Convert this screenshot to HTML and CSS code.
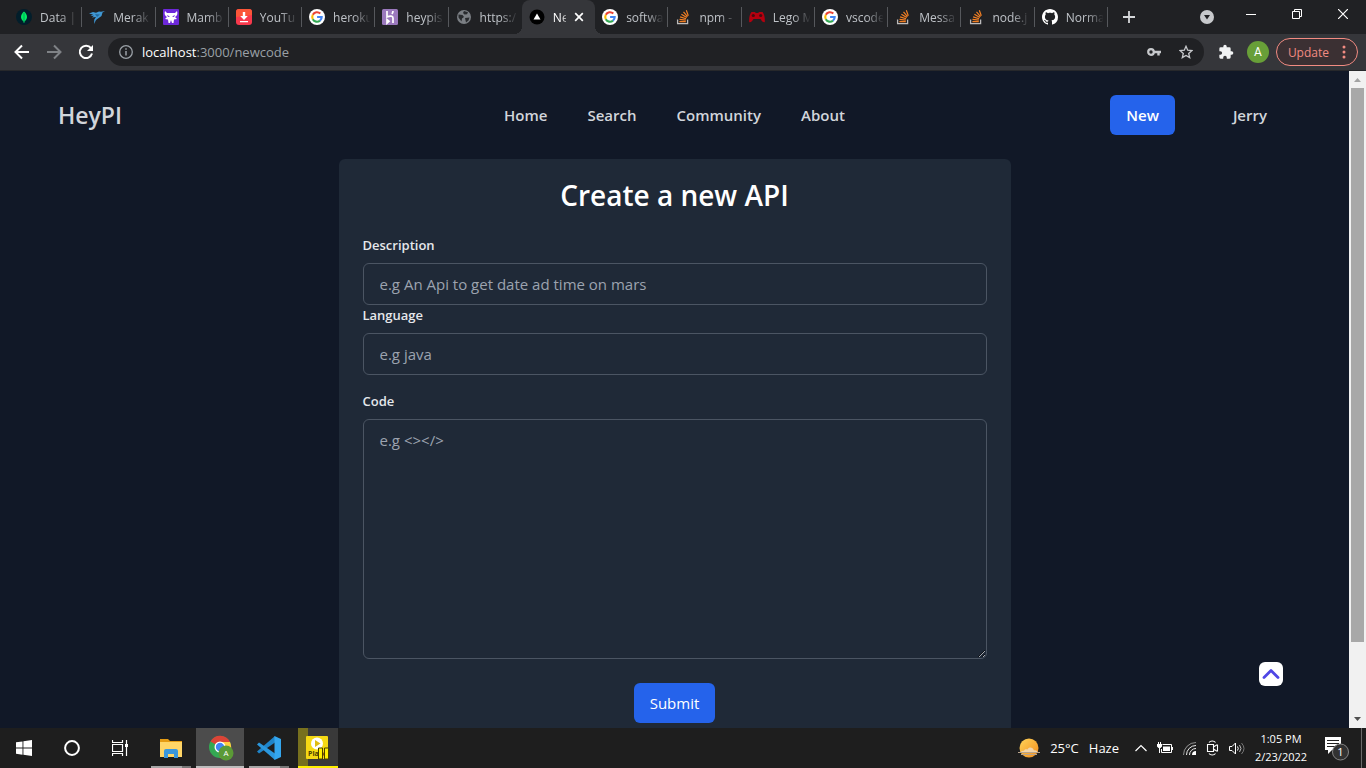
FILE: index.html
```html
<!DOCTYPE html>
<html lang="en">
<head>
<meta charset="utf-8">
<title>HeyPI - Create a new API</title>
<link rel="stylesheet" href="styles.css">
</head>
<body>
<svg class="sprite" aria-hidden="true">
  <symbol id="google" viewBox="0 0 16 16">
    <circle cx="8" cy="8" r="8" fill="#fff"/>
    <g fill="none" stroke-width="2.1">
      <path d="M11.3 4.6A4.7 4.7 0 0 0 3.8 5.8" stroke="#ea4335"/>
      <path d="M3.8 5.8a4.7 4.7 0 0 0 0 4.4" stroke="#fbbc05"/>
      <path d="M3.8 10.2a4.7 4.7 0 0 0 7.2 1.4" stroke="#34a853"/>
      <path d="M11 11.6A4.7 4.7 0 0 0 12.7 8H8.1" stroke="#4285f4"/>
    </g>
  </symbol>
  <symbol id="stack" viewBox="0 0 16 16">
    <path d="M2.600 10.500v4.200h10v-4.200" fill="none" stroke="#bcbbbb" stroke-width="1.300"/>
    <path d="M4.400 12.700h6.400M4.500 10.400l6.300.7M5.100 7.900l6 1.800M6.400 5.200l5.400 3.200M8.500 2.900l4 4.700M11.300 1.200l2 5.600" fill="none" stroke="#f48024" stroke-width="1.200"/>
  </symbol>
</svg>

<header class="browser">
  <div class="tabstrip">
    <div class="tabs">
      <div class="tab"><svg class="fav" viewBox="0 0 16 16"><circle cx="8" cy="8" r="8" fill="#021e2b"/><path d="M8 2.500c4 3.500 4 7.500 0 10.500C4 10 4 6 8 2.500z" fill="#00ed64"/><path d="M8 4v10" stroke="#00a65a" stroke-width="1"/></svg><span class="tab-name">Data |</span></div>
      <div class="tab"><svg class="fav" viewBox="0 0 16 16"><path d="M0 4.500L4 3l3 .8L10 2.500l2 .3L16 2l-2.500 1.500L12.500 7 9 9.500l-2 1.500-2 4 .3-4.500L7 8 3 8.500l2-1.800-3.500.3L4 5.500z" fill="#3f97d3"/><path d="M6 5l5 .5L8 8z" fill="#236a9f"/></svg><span class="tab-name">Merak</span></div>
      <div class="tab"><svg class="fav" viewBox="0 0 16 16"><rect width="16" height="16" rx="1" fill="#6d28d9"/><path d="M2 2c-1 3 0 5 2 6l-2 2 3 .5.500 3.500h1.500L8 11l1 3h1.500l.5-3.500 3-.5-2-2c2-1 3-3 2-6l-2 2H4z" fill="#fff"/><path d="M4 6l3 1.500-2 .5zm8 0L9 7.500l2 .5z" fill="#6d28d9"/></svg><span class="tab-name">Mamb</span></div>
      <div class="tab"><svg class="fav" viewBox="0 0 16 16"><rect width="16" height="16" rx="3" fill="#f8394c"/><path d="M3 0h10a3 3 0 0 1 3 3v3L0 8V3a3 3 0 0 1 3-3z" fill="#fb5638"/><path d="M6.800 3h2.400v4h2.600L8 11 4.200 7h2.600zM4 12h8v1.300H4z" fill="#fff"/></svg><span class="tab-name">YouTu</span></div>
      <div class="tab"><svg class="fav"><use href="#google"/></svg><span class="tab-name">heroku</span></div>
      <div class="tab"><svg class="fav" viewBox="0 0 16 16"><rect width="16" height="16" rx="1.500" fill="#9b79bd"/><path d="M5 2v6c3-1.300 6-1.300 6 1v5M11 2c0 1.500-.5 2-1 3M5 10.500v3.500l2-1.800z" fill="none" stroke="#fff" stroke-width="1.700"/></svg><span class="tab-name">heypis</span></div>
      <div class="tab no-line"><svg class="fav" viewBox="0 0 16 16"><circle cx="8" cy="8" r="7" fill="#7b7f84"/><path d="M2.500 5.500l4 .5 1.500 2-2 1.500-.5 3-3-4zM8 2l4 1.200-1 2-2.500.3L7 4zM9 9l4.500-.5-1 3-2.500 2z" fill="#292b2e"/></svg><span class="tab-name">https:/</span></div>
      <div class="tab active"><svg class="fav" viewBox="0 0 16 16"><circle cx="8" cy="8" r="7.500" fill="#000"/><path d="M8 4.500l3.500 6h-7z" fill="#fff"/></svg><span class="tab-name">Ne</span><button class="bare" aria-label="Close tab"><svg width="10" height="10" viewBox="0 0 10 10"><path d="M1.200 1.200l7.600 7.600m0-7.600L1.200 8.800" stroke="#fff" stroke-width="1.700"/></svg></button></div>
      <div class="tab"><svg class="fav"><use href="#google"/></svg><span class="tab-name">softwa</span></div>
      <div class="tab"><svg class="fav"><use href="#stack"/></svg><span class="tab-name">npm -</span></div>
      <div class="tab"><svg class="fav" viewBox="0 0 16 16"><path d="M2.500 3h3.200L7 4h2l1.300-1h3.200c2 2.500 2.500 6 2.300 10-1.600.8-3-1-4.300-3h-7c-1.300 2-2.700 3.800-4.300 3C0 9 .5 5.500 2.500 3z" fill="#b5000f"/><circle cx="4.300" cy="6.500" r="1.600" fill="#4b090f"/><circle cx="11.700" cy="6.500" r="1.600" fill="#4b090f"/></svg><span class="tab-name">Lego M</span></div>
      <div class="tab"><svg class="fav"><use href="#google"/></svg><span class="tab-name">vscode</span></div>
      <div class="tab"><svg class="fav"><use href="#stack"/></svg><span class="tab-name">Messa</span></div>
      <div class="tab"><svg class="fav"><use href="#stack"/></svg><span class="tab-name">node.j</span></div>
      <div class="tab"><svg class="fav" viewBox="0 0 16 16"><path fill="#fff" d="M8 0C3.580 0 0 3.580 0 8c0 3.540 2.290 6.530 5.470 7.590.4.070.55-.17.55-.38 0-.19-.01-.82-.01-1.490-2.010.37-2.530-.49-2.690-.94-.09-.23-.48-.94-.82-1.130-.28-.15-.68-.52-.01-.53.63-.01 1.080.58 1.230.82.72 1.210 1.870.87 2.330.66.07-.52.28-.87.51-1.070-1.780-.2-3.640-.89-3.640-3.950 0-.87.31-1.590.82-2.150-.08-.2-.36-1.020.08-2.120 0 0 .67-.21 2.200.82.64-.18 1.320-.27 2-.27s1.360.09 2 .27c1.530-1.040 2.200-.82 2.200-.82.44 1.100.16 1.920.08 2.120.51.56.82 1.270.82 2.150 0 3.070-1.870 3.750-3.650 3.950.29.25.54.73.54 1.480 0 1.070-.01 1.930-.01 2.200 0 .21.15.46.55.38A8.010 8.010 0 0 0 16 8c0-4.420-3.580-8-8-8z"/></svg><span class="tab-name">Norma</span></div>
    </div>
    <div class="strip-end">
      <button class="bare new-tab" aria-label="New tab"><svg width="12" height="12" viewBox="0 0 12 12"><path d="M6 0v12M0 6h12" stroke="#d5d7da" stroke-width="1.800"/></svg></button>
      <button class="bare" aria-label="Search tabs"><svg width="14" height="14" viewBox="0 0 14 14"><circle cx="7" cy="7" r="7" fill="#c7c9cc"/><path d="M4 5h6L7 9.500z" fill="#202124"/></svg></button>
      <div class="window-buttons">
        <button class="bare" aria-label="Minimize"><svg width="10" height="10" viewBox="0 0 10 10"><path d="M0 5.500h10" stroke="#fff"/></svg></button>
        <button class="bare" aria-label="Restore"><svg width="10" height="10" viewBox="0 0 10 10"><path d="M.5 2.500h7v7h-7zM2.500 2.500v-2h7v7h-2" fill="none" stroke="#fff"/></svg></button>
        <button class="bare" aria-label="Close"><svg width="10" height="10" viewBox="0 0 10 10"><path d="M0 0l10 10M10 0L0 10" stroke="#fff" stroke-width="1.200"/></svg></button>
      </div>
    </div>
  </div>
  <div class="toolbar">
    <button class="bare" aria-label="Back"><svg width="16" height="16" viewBox="0 0 16 16"><path d="M15 8H2M8 1.500L1.500 8 8 14.500" fill="none" stroke="#fff" stroke-width="2"/></svg></button>
    <button class="bare" aria-label="Forward"><svg width="16" height="16" viewBox="0 0 16 16"><path d="M1 8h13M8 1.500L14.500 8 8 14.500" fill="none" stroke="#7f8286" stroke-width="2"/></svg></button>
    <button class="bare" aria-label="Reload"><svg width="16" height="16" viewBox="0 0 16 16"><path d="M13 4.200A6.200 6.200 0 1 0 14 9.500" fill="none" stroke="#fff" stroke-width="2"/><path d="M15 1v6H9z" fill="#fff"/></svg></button>
    <div class="address">
      <svg width="14" height="14" viewBox="0 0 14 14"><circle cx="7" cy="7" r="6.300" fill="none" stroke="#9aa0a6" stroke-width="1.300"/><path d="M7 6v4.500M7 3.300v1.500" stroke="#9aa0a6" stroke-width="1.500"/></svg>
      <div class="url"><b>localhost</b>:3000/newcode</div>
      <svg width="14" height="14" viewBox="0 0 14 14"><circle cx="4" cy="7" r="2.800" fill="none" stroke="#c7c9cc" stroke-width="2.200"/><path d="M6.500 7H14M11.500 7v3.500" stroke="#c7c9cc" stroke-width="2.400"/></svg>
      <svg class="star" width="14" height="14" viewBox="0 0 14 14"><path d="M7 1.300l1.700 3.900 4.200.4-3.200 2.800 1 4.200L7 10.400l-3.700 2.200 1-4.200L1.100 5.600l4.200-.4z" fill="none" stroke="#c7c9cc" stroke-width="1.300"/></svg>
    </div>
    <button class="bare" aria-label="Extensions"><svg width="16" height="16" viewBox="0 0 24 24"><path fill="#f1f3f4" d="M20.500 11H19V7a2 2 0 0 0-2-2h-4V3.500a2.500 2.500 0 0 0-5 0V5H4a2 2 0 0 0-2 2v3.800h1.500a2.700 2.700 0 0 1 0 5.400H2V20a2 2 0 0 0 2 2h3.800v-1.500a2.700 2.700 0 0 1 5.400 0V22H17a2 2 0 0 0 2-2v-4h1.500a2.500 2.500 0 0 0 0-5z"/></svg></button>
    <button class="avatar" aria-label="Profile">A</button>
    <button class="update">Update<svg width="4" height="14" viewBox="0 0 4 14" fill="#f28b82"><circle cx="2" cy="2" r="1.500"/><circle cx="2" cy="7" r="1.500"/><circle cx="2" cy="12" r="1.500"/></svg></button>
  </div>
</header>

<div class="viewport">
  <main class="page">
    <nav class="nav">
      <a class="logo" href="#">HeyPI</a>
      <div class="links"><a href="#">Home</a><a href="#">Search</a><a href="#">Community</a><a href="#">About</a></div>
      <div class="account"><button class="primary bold">New</button><a href="#">Jerry</a></div>
    </nav>
    <form class="card">
      <h1>Create a new API</h1>
      <label for="description">Description</label>
      <input id="description" type="text" placeholder="e.g An Api to get date ad time on mars">
      <label for="language">Language</label>
      <input id="language" type="text" placeholder="e.g java">
      <label class="spaced" for="code">Code</label>
      <textarea id="code" placeholder="e.g &lt;&gt;&lt;/&gt;"></textarea>
      <button class="primary submit" type="button">Submit</button>
    </form>
    <button class="to-top" aria-label="Back to top"><svg width="18" height="12" viewBox="0 0 18 12"><path d="M2 9.500l7-7 7 7" fill="none" stroke="#4f46e5" stroke-width="2.800" stroke-linecap="round" stroke-linejoin="round"/></svg></button>
  </main>
  <div class="scrollbar" aria-hidden="true">
    <svg width="17" height="17" viewBox="0 0 17 17"><path d="M5 11h7L8.500 7z" fill="#a3a3a3"/></svg>
    <div class="track"><div class="thumb"></div></div>
    <svg width="17" height="17" viewBox="0 0 17 17"><path d="M5 6h7l-3.500 4z" fill="#505050"/></svg>
  </div>
</div>

<footer class="taskbar">
  <div class="apps">
    <button class="app" aria-label="Start"><svg width="16" height="16" viewBox="0 0 16 16"><path d="M0 2.300L6.500 1.400v6.200H0zM7.400 1.200L16 0v7.600H7.400zM0 8.500h6.500v6.200L0 13.800zM7.400 8.500H16V16l-8.600-1.200z" fill="#fff"/></svg></button>
    <button class="app" aria-label="Search"><svg width="16" height="16" viewBox="0 0 16 16"><circle cx="8" cy="8" r="6.900" fill="none" stroke="#fff" stroke-width="2"/></svg></button>
    <button class="app" aria-label="Task view"><svg width="16" height="16" viewBox="0 0 16 16"><path d="M.5 0v2.500h10V0M.5 16v-2.500h10V16M.5 4.500h10v7H.5zM14.500 0v16" fill="none" stroke="#fff" stroke-width="1.200"/><path d="M13 4h3v3h-3z" fill="#fff"/></svg></button>
    <button class="app running grouped after-system" aria-label="File Explorer"><svg width="22" height="19" viewBox="0 0 22 19"><path d="M0 0h8l2 2h12v4H0z" fill="#e59c14"/><path d="M0 3h22v15H0z" fill="#ffd567"/><path d="M4 19v-7a2 2 0 0 1 2-2h10a2 2 0 0 1 2 2v7h-4v-4H8v4z" fill="#3b97dc"/></svg></button>
    <button class="app running current" aria-label="Chrome"><svg width="26" height="26" viewBox="0 0 26 26"><circle cx="12" cy="12" r="11" fill="#34a853"/><path d="M12 12L2.500 6.500A11 11 0 0 1 22 7H12z" fill="#db4437"/><path d="M12 7h10A11 11 0 0 1 12 23l5-8z" fill="#ffcd40"/><circle cx="12" cy="12" r="5.500" fill="#fff"/><circle cx="12" cy="12" r="4.200" fill="#4285f4"/><circle cx="18" cy="18" r="7.500" fill="#5b9a36"/><text class="badge-text" x="18" y="21" text-anchor="middle">A</text></svg></button>
    <button class="app running grouped" aria-label="Visual Studio Code"><svg width="24" height="24" viewBox="0 0 24 24"><path d="M0 15.500L18 0v6.500L2 17.500z" fill="#1f84c9"/><path d="M0 8.500L2 6.500l16 11V24z" fill="#2b97dd"/><path d="M17.500 0L24 3v18l-6.500 3z" fill="#34a6ee"/></svg></button>
    <button class="app running player" aria-label="Player"><svg width="24" height="24" viewBox="0 0 24 24"><rect x="0" y="0" width="22" height="23" rx="1" fill="#f5d914"/><circle cx="11" cy="7.500" r="6" fill="#fff"/><path d="M9 4L14.500 7.500 9 11z" fill="#e0bd10"/><text class="player-text" x="2" y="20">Player</text><path d="M12.500 12h4v11h-4zM18.500 12h4v11h-4z" fill="#fff000" stroke="#4a4100"/></svg></button>
  </div>
  <div class="tray">
    <svg width="22" height="20" viewBox="0 0 22 20"><defs><linearGradient id="sun" x2="1" y2="1"><stop stop-color="#ffd45a"/><stop offset="1" stop-color="#f28c1b"/></linearGradient></defs><circle cx="11" cy="10" r="9.500" fill="url(#sun)"/><path d="M2 14.500h18c-1-2-2.500-2.500-4-2-1-3.500-5-4-6.500-1-1.500-.5-3 0-3.500 1.200-2 0-3.200.6-4 1.800z" fill="#f0d9b8" opacity=".9"/><path d="M0 14.500h22M3 16.500h16" stroke="#b8a48c"/></svg>
    <span class="forecast"><span>25°C</span><span>Haze</span></span>
    <svg width="12" height="8" viewBox="0 0 12 8"><path d="M.5 7L6 1.500 11.500 7" fill="none" stroke="#fff" stroke-width="1.200"/></svg>
    <svg width="16" height="12" viewBox="0 0 16 12"><path d="M5.500 2.500h9v8h-10V7M15.500 5v3" fill="none" stroke="#fff"/><path d="M6 4.500h7v4.500H6zM0 2h5v2.500L3.500 6h-2L0 4.500zM1 0h1v2H1zM3 0h1v2H3zM2 6h1v5H2z" fill="#fff"/></svg>
    <svg width="13" height="13" viewBox="0 0 13 13"><g fill="none" stroke="#eee"><path d="M.5 13A12.500 12.500 0 0 1 13 .5" opacity=".55"/><path d="M3.500 13A9.500 9.500 0 0 1 13 3.500M6.500 13A6.500 6.500 0 0 1 13 6.500"/></g><path d="M9 13a4 4 0 0 1 4-4v4z" fill="#fff"/></svg>
    <svg width="13" height="16" viewBox="0 0 13 16"><path d="M1.500 4.500h6v7h-6zM7.500 7l3-2h1v6h-1l-3-2M3 2.500C4.500.5 8 .5 9.500 2.500M3 13.500c1.500 2 5 2 6.500 0" fill="none" stroke="#fff" stroke-width="1.100"/></svg>
    <svg width="16" height="13" viewBox="0 0 16 13"><path d="M.5 4.500H3L6.500 1v11L3 8.500H.5zM8.500 4.500q1.500 2 0 4" fill="none" stroke="#fff"/><path d="M10.500 3q3 3.500 0 7" fill="none" stroke="#bbb"/><path d="M12.500 1q5 5.500 0 11" fill="none" stroke="#777"/></svg>
    <div class="clock"><span>1:05 PM</span><span>2/23/2022</span></div>
    <svg class="notices" width="26" height="26" viewBox="0 0 26 26"><path d="M1 2h16v13H8l-4 4v-4H1z" fill="#fff"/><path d="M3 5.500h12M3 8.500h12M3 11.500h8" stroke="#222"/><circle cx="16.500" cy="17" r="8" fill="#323232" stroke="#858585"/><text class="notice-text" x="16.500" y="21" text-anchor="middle">1</text></svg>
    <div class="show-desktop"></div>
  </div>
</footer>
</body>
</html>
```
FILE: styles.css
```css
* { box-sizing: border-box; }
body {
  margin: 0;
  height: 100vh;
  display: flex;
  flex-direction: column;
  overflow: hidden;
  background: #111827;
  color: #d1d5db;
  font-family: "Segoe UI", "Open Sans", "Noto Sans", sans-serif;
  font-size: 15px;
}
button, input, textarea { font: inherit; color: inherit; margin: 0; }
button { border: 0; cursor: pointer; }
a { color: inherit; text-decoration: none; }
svg { display: block; flex: none; }
.sprite { position: absolute; width: 0; height: 0; }
.bare { display: flex; padding: 0; background: none; }

/* Browser frame */
.browser { flex: none; background: #35363a; border-bottom: 1px solid #27282b; }
.tabstrip { display: flex; height: 34px; padding-left: 9px; background: #202124; }
.tabs { flex: 1; min-width: 0; display: grid; grid-template-columns: repeat(15, minmax(0, 1fr)); }
.tab {
  position: relative;
  display: flex;
  align-items: center;
  gap: 8px;
  padding: 0 5px 0 7px;
  color: #bfc3c8;
  font-size: 12px;
}
.tab::after {
  content: "";
  position: absolute;
  right: 0;
  top: 7px;
  width: 1px;
  height: 20px;
  background: #56585c;
}
.tab.no-line::after { display: none; }
.fav { width: 16px; height: 16px; }
.tab-name {
  flex: 1;
  min-width: 0;
  overflow: hidden;
  white-space: nowrap;
  -webkit-mask-image: linear-gradient(to right, #000 20px, transparent 38px);
  mask-image: linear-gradient(to right, #000 20px, transparent 38px);
}
.tab.active { background: #35363a; border-radius: 8px 8px 0 0; color: #fff; padding-right: 11px; }
.tab.active .tab-name {
  -webkit-mask-image: linear-gradient(to right, #000 8px, transparent 18px);
  mask-image: linear-gradient(to right, #000 8px, transparent 18px);
}
.tab.active::before, .tab.active::after {
  content: "";
  position: absolute;
  top: auto;
  bottom: 0;
  width: 8px;
  height: 8px;
}
.tab.active::before { left: -8px; background: radial-gradient(circle at 0 0, #202124 8px, #35363a 8px); }
.tab.active::after { right: -8px; background: radial-gradient(circle at 100% 0, #202124 8px, #35363a 8px); }
.strip-end { flex: none; width: 258px; display: flex; align-items: center; padding: 0 18px 0 15px; }
.new-tab { margin-right: 65px; }
.window-buttons { flex: 1; display: flex; justify-content: space-between; padding: 0 0 6px 32px; }
.toolbar { display: flex; align-items: center; gap: 16px; height: 36px; padding: 0 8px 0 14px; }
.address {
  flex: 1;
  display: flex;
  align-items: center;
  gap: 9px;
  height: 28px;
  margin: 0 -2px 0 -2px;
  padding: 0 11px;
  border-radius: 14px;
  background: #202124;
  color: #9aa0a6;
  font-size: 13px;
}
.url { flex: 1; }
.url b { color: #fff; font-weight: 400; }
.star { margin-left: 9px; }
.avatar {
  width: 22px;
  height: 22px;
  margin: 0 -9px 0 -3px;
  padding: 0;
  border-radius: 50%;
  background: #689f38;
  color: #fff;
  font-family: Roboto, sans-serif;
  font-size: 12px;
}
.update {
  display: flex;
  align-items: center;
  gap: 13px;
  height: 28px;
  padding: 0 11px;
  border: 1px solid #f28b82;
  border-radius: 14px;
  background: #3b3033;
  color: #f28b82;
  font-size: 12px;
}

/* Page */
.viewport { flex: 1; min-height: 0; display: flex; }
.page { position: relative; flex: 1; overflow: hidden; }
.nav {
  display: grid;
  grid-template-columns: 1fr auto 1fr;
  align-items: center;
  padding: 24px 58px;
  font-weight: 600;
}
.logo { font-size: 23px; line-height: 32px; }
.links { display: flex; gap: 40px; }
.account { display: flex; align-items: center; justify-content: flex-end; gap: 58px; padding-right: 24px; }
.primary {
  padding: 8px 16px;
  border-radius: 6px;
  background: #2563eb;
  color: #fff;
  line-height: 24px;
}
.bold { font-weight: 600; }
.card {
  display: flex;
  flex-direction: column;
  max-width: 672px;
  margin: 0 auto;
  padding: 18px 24px 24px;
  border-radius: 6px;
  background: #1f2937;
}
.card h1 { margin: 0 0 22px; color: #fff; font-size: 28px; font-weight: 600; line-height: 36px; text-align: center; }
.card label { margin-bottom: 8px; color: #e5e7eb; font-size: 13px; font-weight: 600; line-height: 20px; }
.card .spaced { margin-top: 16px; }
.card input, .card textarea {
  width: 100%;
  padding: 8px 16px;
  border: 1px solid #4b5563;
  border-radius: 6px;
  background: #1f2937;
  line-height: 24px;
  outline: 0;
}
.card input { height: 42px; }
.card textarea { display: block; height: 240px; }
.card ::placeholder { color: #9ca3af; }
.submit { align-self: center; margin-top: 24px; }
.to-top {
  position: absolute;
  right: 66px;
  bottom: 42px;
  display: grid;
  place-items: center;
  width: 24px;
  height: 24px;
  padding: 0;
  border-radius: 6px;
  background: #fff;
}
.scrollbar { flex: none; width: 17px; display: flex; flex-direction: column; background: #f1f1f1; }
.track { flex: 1; padding: 0 2px; }
.thumb { height: 89%; background: #a8a8a8; }

/* Taskbar */
.taskbar { flex: none; display: flex; justify-content: space-between; height: 40px; background: #1e1e1e; color: #fff; }
.apps { display: flex; gap: 1px; }
.app {
  position: relative;
  display: grid;
  place-items: center;
  width: 48px;
  padding: 0;
  background: none;
}
.app:nth-child(-n+2) { margin-right: -1px; }
.after-system { margin-left: 2px; }
.running::after {
  content: "";
  position: absolute;
  left: 4px;
  right: 4px;
  bottom: 0;
  height: 2px;
  background: #a6a6a6;
}
.grouped::after { background: linear-gradient(to right, #a6a6a6 31px, #777 31px); }
.current { background: #4c4c4c; padding-left: 2px; }
.current::after { left: 0; right: 0; background: #bdbdbd; }
.player {
  width: 40px;
  margin-left: 4px;
  background: linear-gradient(to right, #77701e 10px, #393939 10px);
}
.player::after { left: 0; right: 0; background: #fff000; }
.badge-text { fill: #fff; font-size: 8px; }
.player-text { fill: #4a4100; font-size: 7px; font-weight: 700; }
.tray { display: flex; align-items: center; gap: 10px; font-size: 13px; }
.forecast { display: flex; gap: 10px; margin-right: 6px; }
.clock { display: flex; flex-direction: column; width: 52px; align-items: center; font-size: 11px; line-height: 18px; white-space: nowrap; }
.notices { margin: 0 1px 0 7px; }
.notice-text { fill: #fff; font-size: 11px; }
.show-desktop { width: 5px; height: 40px; border-left: 1px solid #6a6a6a; }
```
